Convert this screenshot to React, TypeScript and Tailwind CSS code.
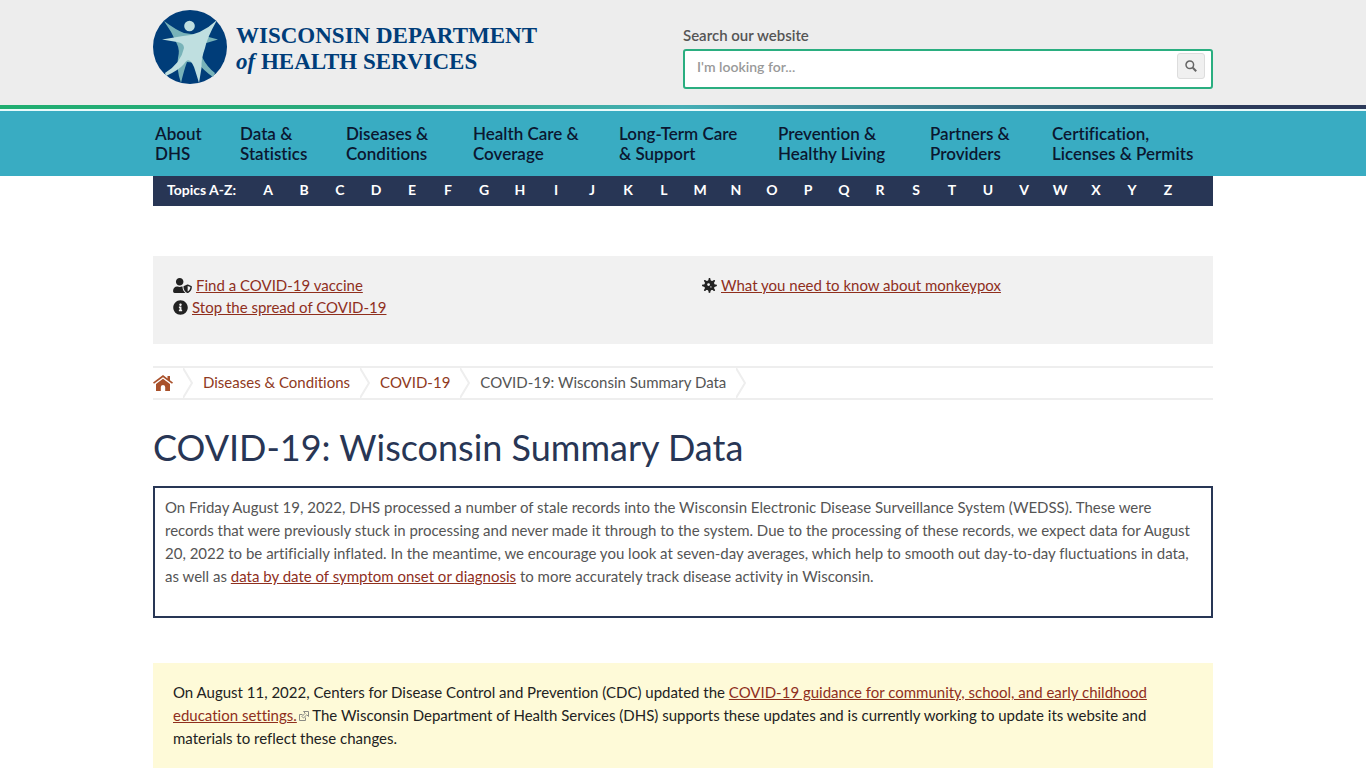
import React from 'react';
import { FaUserShield, FaInfoCircle } from 'react-icons/fa';
import { FaVirus } from 'react-icons/fa6';

const navItems = [
  ['About', 'DHS'],
  ['Data &', 'Statistics'],
  ['Diseases &', 'Conditions'],
  ['Health Care &', 'Coverage'],
  ['Long-Term Care', '& Support'],
  ['Prevention &', 'Healthy Living'],
  ['Partners &', 'Providers'],
  ['Certification,', 'Licenses & Permits'],
];

const letters = 'ABCDEFGHIJKLMNOPQRSTUVWXYZ'.split('');

const crumbs = ['Diseases & Conditions', 'COVID-19'];

function LogoMark() {
  return (
    <svg viewBox="0 0 74 74" className="w-[74px] h-[74px] shrink-0" aria-hidden="true">
      <circle cx="37" cy="37" r="37" fill="#003d79" />
      {/* back figure */}
      <path
        d="M11 11 Q23 20 31 23 L52 26 L65 29.5 L50 34 L49 47 Q54 57 62 63 L60 67 Q50 60 45 53 L34 52 Q31 60 28 73 Q23 58 25 48 Q27 40 24 34 Q19 22 11 11Z"
        fill="#78b3b9"
      />
      {/* front figure */}
      <path
        d="M64 10 Q54 28 52 38 Q48 49 48.5 58 L46 73 Q43 63 41 57 Q36 45 31 54 Q26 60 13 66 L12 63 Q28 53 31 38 Q31 33 24 32 L9 29.5 L30 26 Q48 25 64 10Z"
        fill="#bfdfe0"
      />
      <circle cx="36.5" cy="16" r="5.3" fill="#bfdfe0" />
    </svg>
  );
}

function SearchIcon() {
  return (
    <svg viewBox="0 0 12 12" className="w-3 h-3" fill="none" stroke="currentColor" aria-hidden="true">
      <circle cx="4.8" cy="4.8" r="3.8" strokeWidth="1.5" />
      <path d="M7.8 7.8 L11.2 11.2" strokeWidth="2" />
    </svg>
  );
}

function HomeIcon() {
  return (
    <svg viewBox="0 0 20 16" className="w-5 h-4" fill="#a9512b" aria-hidden="true">
      <path d="M10 0 L0 7.5 L1 8.7 L10 2.2 L19 8.7 L20 7.5 L17 5.2 V1 H14.5 V3.4Z" />
      <path d="M10 3.8 L3 9 V16 H7.8 V12 Q8 10 10 10 Q12 10 12.2 12 V16 H17 V9Z" />
    </svg>
  );
}

function CrumbArrow() {
  return (
    <svg viewBox="0 0 10 30" className="w-[10px] h-[30px] shrink-0" fill="none" stroke="#eeeeee" strokeWidth="2" aria-hidden="true">
      <path d="M0 0 L9 15 L0 30" />
    </svg>
  );
}

function ExternalIcon() {
  return (
    <svg viewBox="0 0 10 10" className="inline w-[10px] h-[10px] ml-[2px] align-baseline" fill="none" stroke="#8a8a84" aria-hidden="true">
      <path d="M3.5 3.5 H0.5 V9.5 H6.5 V6.5" />
      <path d="M4.5 0.5 H9.5 V5.5 L7.8 3.8 L4.5 7 L3 5.5 L6.2 2.2Z" />
    </svg>
  );
}

export default function App() {
  return (
    <div className="bg-white font-['Lato',sans-serif] [font-variant-ligatures:no-common-ligatures] text-[15px] text-[#555555]">
      <header className="bg-[#ededed]">
        <div className="max-w-[1060px] mx-auto h-[105px] grid grid-cols-2">
          <a href="#" className="flex gap-[9px] pt-[10px] self-start text-[#003d79]">
            <LogoMark />
            <span className="pt-[13px] font-['Liberation_Serif',serif] font-bold text-[23px] leading-[26px] whitespace-nowrap">
              WISCONSIN DEPARTMENT
              <br />
              <i>of</i> HEALTH SERVICES
            </span>
          </a>
          <form className="pt-6" onSubmit={(e) => e.preventDefault()}>
            <label htmlFor="search" className="block font-semibold leading-[22px] mb-[3px]">
              Search our website
            </label>
            <div className="flex items-start h-10 bg-white border-2 border-[#2aae80] rounded-[3px] pl-3 pr-[6px] pt-[2px]">
              <input
                id="search"
                type="text"
                placeholder="I'm looking for..."
                className="grow h-[26px] text-[14px] font-semibold outline-none placeholder:text-[#999999]"
              />
              <button
                type="submit"
                aria-label="Search"
                className="w-7 h-[26px] flex items-center justify-center bg-[#f0f0f0] border border-[#dddddd] rounded-[3px] text-[#666666]"
              >
                <SearchIcon />
              </button>
            </div>
          </form>
        </div>
        <div className="h-1 bg-[linear-gradient(to_right,#1fae70,#2aaa7c_25%,#45aeb5_50%,#2c3a5a_90%)]" />
      </header>

      <nav className="bg-[#39acc2] border-t-2 border-[#e8fbfb]">
        <div className="max-w-[1060px] mx-auto h-[65px] pt-[13px] pl-[2px] grid grid-cols-[85px_106px_127px_146px_159px_152px_122px_1fr] font-semibold text-[17px] leading-5 text-[#0b1730]">
          {navItems.map(([first, second]) => (
            <a key={first} href="#" className="whitespace-nowrap">
              {first}
              <br />
              {second}
            </a>
          ))}
        </div>
      </nav>

      <div className="max-w-[1060px] mx-auto">
        <div className="h-[30px] bg-[#283655] text-white text-[14px] font-bold leading-7 flex pl-[14px]">
          <span className="w-[83px]">Topics A-Z:</span>
          {letters.map((letter) => (
            <a key={letter} href="#" className="w-9 text-center">
              {letter}
            </a>
          ))}
        </div>

        <section className="mt-[50px] bg-[#f1f1f1] h-[88px] px-5 pt-[18px] grid grid-cols-[529px_1fr] items-start leading-[22px] text-[#222222]">
          <ul>
            <li className="flex items-center gap-1">
              <FaUserShield className="w-[19px] h-[15px]" />
              <a href="#" className="text-[#8f2f1d] underline">Find a COVID-19 vaccine</a>
            </li>
            <li className="flex items-center gap-1">
              <FaInfoCircle className="w-[15px] h-[15px]" />
              <a href="#" className="text-[#8f2f1d] underline">Stop the spread of COVID-19</a>
            </li>
          </ul>
          <div className="flex items-center gap-1">
            <FaVirus className="w-[15px] h-[15px]" />
            <a href="#" className="text-[#8f2f1d] underline">What you need to know about monkeypox</a>
          </div>
        </section>

        <nav className="mt-[22px] border-y-2 border-[#eeeeee] h-[34px] flex items-start gap-[10px] leading-7" aria-label="Breadcrumb">
          <a href="#" aria-label="Home" className="h-[30px] flex items-center">
            <HomeIcon />
          </a>
          <CrumbArrow />
          {crumbs.map((crumb) => (
            <React.Fragment key={crumb}>
              <a href="#" className="text-[#8f3a22]">{crumb}</a>
              <CrumbArrow />
            </React.Fragment>
          ))}
          <span>COVID-19: Wisconsin Summary Data</span>
          <CrumbArrow />
        </nav>

        <main>
          <h1 className="mt-[25px] text-4xl leading-[44px] text-[#283655]">COVID-19: Wisconsin Summary Data</h1>

          <div className="mt-[17px] border-2 border-[#283655] h-[132px] px-[10px] pt-2 leading-[23px]">
            <p>
              On Friday August 19, 2022, DHS processed a number of stale records into the Wisconsin Electronic Disease
              Surveillance System (WEDSS). These were records that were previously stuck in processing and never made it
              through to the system. Due to the processing of these records, we expect data for August 20, 2022 to be
              artificially inflated. In the meantime, we encourage you look at seven-day averages, which help to smooth
              out day-to-day fluctuations in data, as well as{' '}
              <a href="#" className="text-[#8f2f1d] underline">data by date of symptom onset or diagnosis</a> to more
              accurately track disease activity in Wisconsin.
            </p>
          </div>

          <div className="mt-[45px] bg-[#fefad8] px-5 pt-[18px] pb-[18px] leading-[23px] text-[#222222]">
            <p>
              On August 11, 2022, Centers for Disease Control and Prevention (CDC) updated the{' '}
              <a href="#" className="text-[#8f2f1d] underline">
                COVID-19 guidance for community, school, and early childhood education settings.
              </a>
              <ExternalIcon /> The Wisconsin Department of Health Services (DHS) supports these updates and is currently
              working to update its website and materials to reflect these changes.
            </p>
          </div>
        </main>
      </div>
    </div>
  );
}
